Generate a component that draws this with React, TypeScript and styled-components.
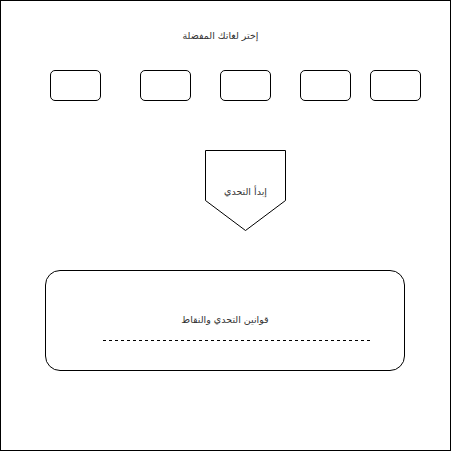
import styled, { createGlobalStyle } from "styled-components";

const GlobalStyle = createGlobalStyle`
  html, body {
    margin: 0;
    padding: 0;
    background: #fff;
  }
  body {
    font-family: "DejaVu Sans", "Noto Sans", sans-serif;
  }
`

const Frame = styled.div`
  box-sizing: border-box;
  width: 451px;
  height: 451px;
  border: 1px solid #000;
  display: flex;
  flex-direction: column;
  padding-top: 28px;
`
const Title = styled.div`
  font-size: 9.5px;
  line-height: 14px;
  color: #333;
  text-align: center;
  direction: rtl;
  padding-right: 10px;
`
const LangRow = styled.div`
  display: flex;
  margin-top: 27px;
  padding-left: 49px;
`
const LangBox = styled.div<{ gap: number }>`
  box-sizing: border-box;
  width: 51px;
  height: 31px;
  border: 1px solid #000;
  border-radius: 5px;
  margin-left: ${(p) => p.gap}px;
`
const StartWrap = styled.div`
  position: relative;
  width: 81px;
  height: 81px;
  margin-top: 49px;
  margin-left: 204px;
  display: flex;
  align-items: center;
  justify-content: center;
`
const StartShape = styled.svg`
  position: absolute;
  left: 0;
  top: 0;
`
const StartLabel = styled.span`
  position: relative;
  font-size: 9.5px;
  color: #333;
  direction: rtl;
  margin-top: 2px;
`
const RulesCard = styled.div`
  box-sizing: border-box;
  width: 360px;
  height: 101px;
  margin-top: 39px;
  margin-left: 44px;
  border: 1px solid #000;
  border-radius: 15px;
  padding-top: 42px;
  display: flex;
  flex-direction: column;
`
const RulesTitle = styled.div`
  font-size: 9.5px;
  line-height: 14px;
  color: #333;
  text-align: center;
  direction: rtl;
`
const DashLine = styled.div`
  width: 268px;
  height: 1px;
  margin-left: 57px;
  margin-top: 13px;
  background-image: repeating-linear-gradient(90deg, #000 0 3px, transparent 3px 6px);
`

const gaps = [0, 39, 29, 29, 19];

const App = () => {
  return (
    <>
      <GlobalStyle />
      <Frame>
        <Title>إختر لغاتك المفضلة</Title>
        <LangRow>
          {gaps.map((g, i) => (
            <LangBox key={i} gap={g} />
          ))}
        </LangRow>
        <StartWrap>
          <StartShape width="81" height="81" viewBox="0 0 81 81">
            <path d="M0.5 0.5 H80.5 V50.5 L40.5 80.5 L0.5 50.5 Z" fill="#fff" stroke="#000" strokeWidth="1" />
          </StartShape>
          <StartLabel>إبدأ التحدي</StartLabel>
        </StartWrap>
        <RulesCard>
          <RulesTitle>قوانين التحدي والنقاط</RulesTitle>
          <DashLine />
        </RulesCard>
      </Frame>
    </>
  )
}

export default App
